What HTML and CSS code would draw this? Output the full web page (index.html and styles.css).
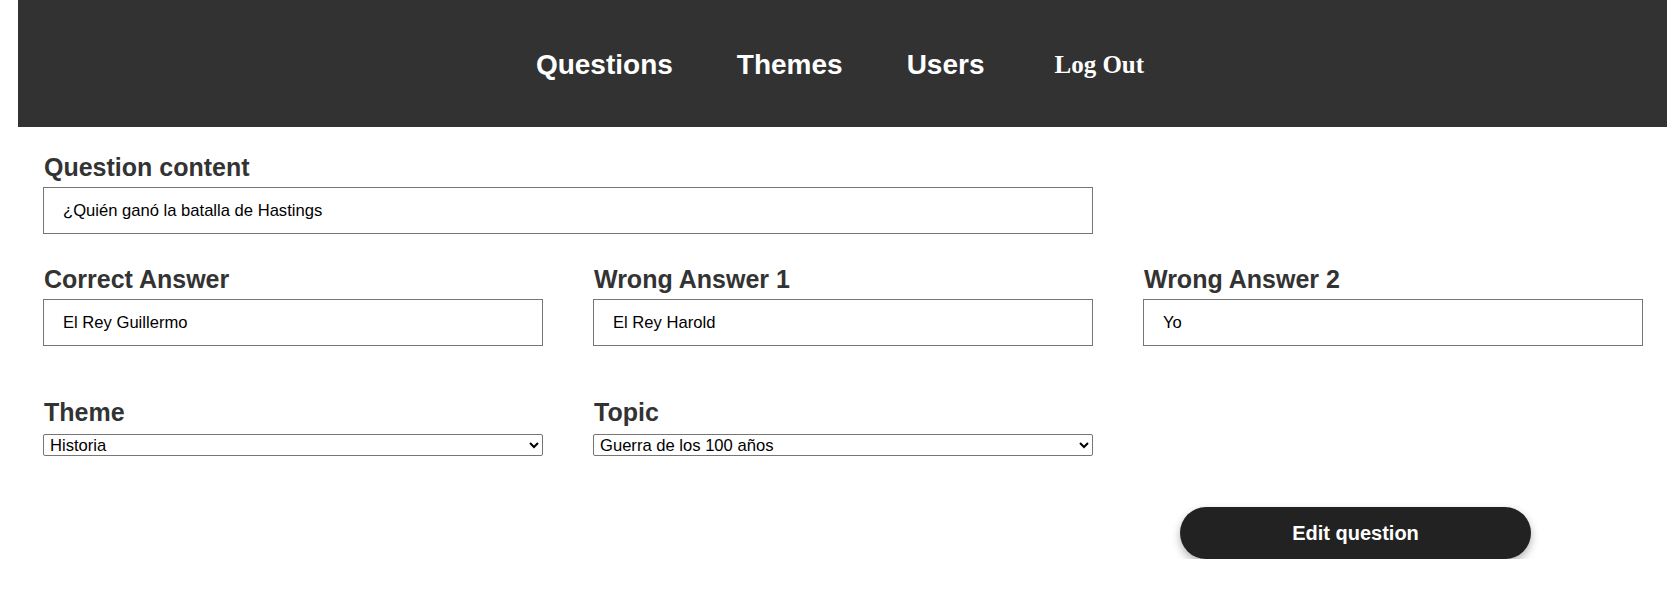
FILE: index.html
```html
<!DOCTYPE html>
<html lang="es">
<head>
<meta charset="utf-8">
<title>Edit question</title>
<link rel="stylesheet" href="styles.css">
</head>
<body>
<header class="topbar">
  <nav class="nav">
    <a class="nav-link" href="#">Questions</a>
    <a class="nav-link" href="#">Themes</a>
    <a class="nav-link" href="#">Users</a>
    <button class="logout" type="button">Log Out</button>
  </nav>
</header>
<main class="form">
  <div class="row row-first">
    <div class="field field-wide">
      <label class="label" for="q">Question content</label>
      <input class="text-input" id="q" type="text" value="¿Quién ganó la batalla de Hastings">
    </div>
  </div>
  <div class="row row-answers">
    <div class="field">
      <label class="label" for="a1">Correct Answer</label>
      <input class="text-input" id="a1" type="text" value="El Rey Guillermo">
    </div>
    <div class="field">
      <label class="label" for="a2">Wrong Answer 1</label>
      <input class="text-input" id="a2" type="text" value="El Rey Harold">
    </div>
    <div class="field">
      <label class="label" for="a3">Wrong Answer 2</label>
      <input class="text-input" id="a3" type="text" value="Yo">
    </div>
  </div>
  <div class="row row-selects">
    <div class="field">
      <label class="label label-select" for="t">Theme</label>
      <select class="select" id="t"><option>Historia</option></select>
    </div>
    <div class="field">
      <label class="label label-select" for="tp">Topic</label>
      <select class="select" id="tp"><option>Guerra de los 100 años</option></select>
    </div>
  </div>
  <div class="row row-actions">
    <button class="submit" type="button">Edit question</button>
  </div>
</main>
</body>
</html>
```
FILE: styles.css
```css
* { box-sizing: border-box; }

body {
  margin: 0;
  font-family: "Liberation Sans", Arial, sans-serif;
  background: #fff;
  color: #333;
}

.topbar {
  margin: 0 8px 0 18px;
  height: 127px;
  background: #323232;
  display: flex;
  align-items: center;
  justify-content: center;
}

.nav {
  display: flex;
  align-items: center;
  gap: 64px;
  margin-left: -5px;
  padding-top: 2px;
}

.nav-link {
  color: #fff;
  text-decoration: none;
  font-weight: bold;
  font-size: 28px;
}

.logout {
  background: none;
  border: none;
  padding: 0;
  margin-left: 6px;
  color: #fff;
  font-family: "Liberation Serif", "Times New Roman", serif;
  font-weight: bold;
  font-size: 25px;
  cursor: pointer;
}

.form {
  padding-left: 43px;
}

.row {
  display: grid;
  grid-template-columns: repeat(3, 500px);
  column-gap: 50px;
}

.row-first { margin-top: 26px; }
.row-answers { margin-top: 31px; }
.row-selects { margin-top: 52px; }
.row-actions { margin-top: 51px; }

.field {
  display: flex;
  flex-direction: column;
}

.field-wide { grid-column: 1 / 3; }

.label {
  display: block;
  font-size: 25px;
  line-height: 28px;
  font-weight: bold;
  color: #333;
  margin-bottom: 6px;
  padding-left: 1px;
}

.label-select { margin-bottom: 8px; }

.text-input {
  height: 47px;
  border: 1px solid #767676;
  padding: 0 19px;
  font-family: "Liberation Sans", Arial, sans-serif;
  font-size: 16.6px;
  color: #000;
  background: #fff;
}

.select {
  height: 22px;
  border: 1px solid #767676;
  border-radius: 2px;
  font-family: "Liberation Sans", Arial, sans-serif;
  font-size: 16.6px;
  color: #000;
  background: #fff;
  padding: 0 2px;
}

.submit {
  grid-column: 3;
  margin-left: 37px;
  width: 351px;
  height: 52px;
  border: none;
  border-radius: 26px;
  background: #222;
  color: #fff;
  font-family: "Liberation Sans", Arial, sans-serif;
  font-weight: bold;
  font-size: 20px;
  box-shadow: 0 4px 8px rgba(0, 0, 0, 0.3);
  cursor: pointer;
}
```
